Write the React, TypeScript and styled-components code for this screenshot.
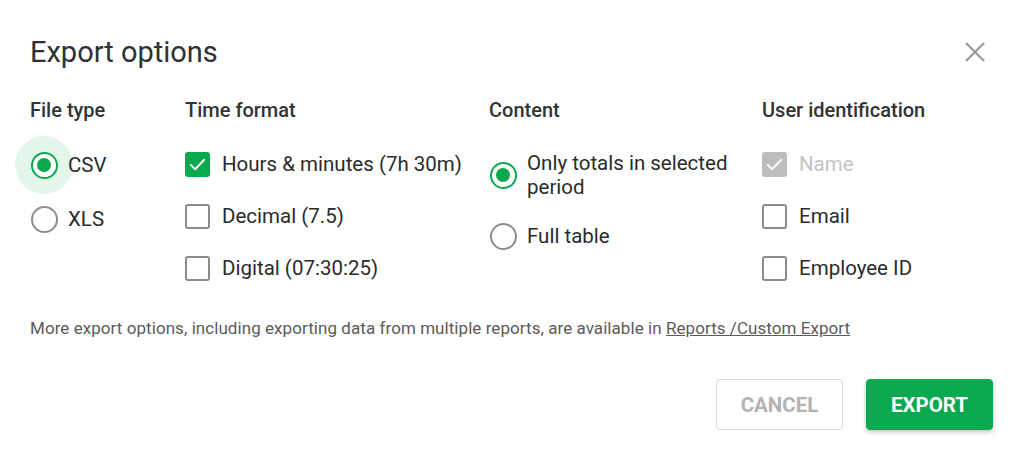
import styled, { createGlobalStyle } from "styled-components";

const GlobalStyle = createGlobalStyle`
  html, body {
    margin: 0;
    padding: 0;
    background: #ffffff;
  }
  body {
    font-family: Roboto, "Liberation Sans", sans-serif;
    -webkit-font-smoothing: antialiased;
  }
`;

const GREEN = "#0aa84f";

const Dialog = styled.div`
  width: 1020px;
  height: 457px;
  box-sizing: border-box;
  padding: 28px 27px 0 30px;
  background: #fff;
  color: #2c2c2e;
`;

const Header = styled.div`
  display: flex;
  align-items: center;
  justify-content: space-between;
  height: 48px;
`;

const Title = styled.h2`
  margin: 0;
  font-size: 29px;
  font-weight: 400;
  color: #2e3035;
`;

const Close = styled.button`
  border: 0;
  background: none;
  padding: 0;
  margin-right: 6px;
  width: 24px;
  height: 24px;
  display: flex;
  align-items: center;
  justify-content: center;
  cursor: pointer;
`;

const Columns = styled.div`
  display: grid;
  grid-template-columns: 155px 304px 273px 1fr;
  margin-top: 22px;
`;

const Column = styled.div`
  display: flex;
  flex-direction: column;
`;

const ColTitle = styled.div`
  font-size: 20px;
  font-weight: 500;
  line-height: 24px;
  color: #333;
  margin-bottom: 29px;
`;

const Options = styled.div<{ $gap?: number }>`
  display: flex;
  flex-direction: column;
  gap: ${(p) => p.$gap ?? 26}px;
`;

const Option = styled.label<{ disabled?: boolean }>`
  display: flex;
  align-items: center;
  gap: 10px;
  min-height: 26px;
  font-size: 20.5px;
  line-height: 24px;
  color: ${(p) => (p.disabled ? "#c4c4c4" : "#2b2b2b")};
  cursor: pointer;
`;

const Text = styled.span`
  position: relative;
`;

const RadioWrap = styled.span`
  position: relative;
  flex: none;
  width: 28px;
  height: 28px;
  display: flex;
  align-items: center;
  justify-content: center;
`;

const Ripple = styled.span`
  position: absolute;
  left: -15px;
  top: -15px;
  width: 58px;
  height: 58px;
  border-radius: 50%;
  background: #e3f6ea;
`;

const RadioRing = styled.span<{ checked?: boolean }>`
  position: relative;
  box-sizing: border-box;
  width: 27px;
  height: 27px;
  border-radius: 50%;
  border: 2.5px solid ${(p) => (p.checked ? GREEN : "#8c8c8c")};
  background: #fff;
  display: flex;
  align-items: center;
  justify-content: center;
  &::after {
    content: "";
    display: ${(p) => (p.checked ? "block" : "none")};
    width: 14px;
    height: 14px;
    border-radius: 50%;
    background: ${GREEN};
  }
`;

const Box = styled.span<{ checked?: boolean; disabled?: boolean }>`
  flex: none;
  box-sizing: border-box;
  width: 25px;
  height: 25px;
  margin-right: 2px;
  border-radius: 3px;
  border: 2px solid
    ${(p) => (p.disabled ? "#bdbdbd" : p.checked ? GREEN : "#8f8a8a")};
  background: ${(p) => (p.disabled ? "#bdbdbd" : p.checked ? GREEN : "#fff")};
  display: flex;
  align-items: center;
  justify-content: center;
`;

const Note = styled.p`
  margin: 36px 0 0;
  font-size: 17px;
  line-height: 22px;
  letter-spacing: 0.06px;
  color: #5e5a5a;
  a {
    color: #5e5a5a;
    text-decoration: underline;
  }
`;

const Actions = styled.div`
  display: flex;
  justify-content: flex-end;
  gap: 23px;
  margin-top: 40px;
`;

const Button = styled.button<{ primary?: boolean }>`
  width: 127px;
  height: 51px;
  border-radius: 4px;
  font-family: Roboto, "Liberation Sans", sans-serif;
  font-size: 20.5px;
  font-weight: 700;
  cursor: pointer;
  border: 1px solid ${(p) => (p.primary ? GREEN : "#dcdcdc")};
  background: ${(p) => (p.primary ? GREEN : "#fff")};
  color: ${(p) => (p.primary ? "#fff" : "#b3b3b3")};
  box-shadow: ${(p) => (p.primary ? "0 2px 4px rgba(0,0,0,0.25)" : "none")};
`;

function Check() {
  return (
    <svg width="19" height="19" viewBox="0 0 24 24" fill="none">
      <path d="M3.5 12.5l5.5 5.5L20.5 6" stroke="#fff" strokeWidth="2.3" strokeLinecap="round" strokeLinejoin="round" />
    </svg>
  );
}

function Radio({ label, checked, ripple }: { label: string; checked?: boolean; ripple?: boolean }) {
  return (
    <Option>
      <RadioWrap>
        {ripple && <Ripple />}
        <RadioRing checked={checked} />
      </RadioWrap>
      <Text>{label}</Text>
    </Option>
  );
}

function Checkbox({ label, checked, disabled }: { label: string; checked?: boolean; disabled?: boolean }) {
  return (
    <Option disabled={disabled}>
      <Box checked={checked} disabled={disabled}>
        {checked && <Check />}
      </Box>
      <Text>{label}</Text>
    </Option>
  );
}

export default function App() {
  return (
    <>
      <GlobalStyle />
      <Dialog>
        <Header>
          <Title>Export options</Title>
          <Close aria-label="Close">
            <svg width="22" height="22" viewBox="0 0 22 22">
              <path d="M2 2L20 20M20 2L2 20" stroke="#9b9da4" strokeWidth="2.4" />
            </svg>
          </Close>
        </Header>
        <Columns>
          <Column>
            <ColTitle>File type</ColTitle>
            <Options>
              <Radio label="CSV" checked ripple />
              <Radio label="XLS" />
            </Options>
          </Column>
          <Column>
            <ColTitle>Time format</ColTitle>
            <Options>
              <Checkbox label="Hours & minutes (7h 30m)" checked />
              <Checkbox label="Decimal (7.5)" />
              <Checkbox label="Digital (07:30:25)" />
            </Options>
          </Column>
          <Column>
            <ColTitle>Content</ColTitle>
            <Options $gap={23}>
              <Radio label="Only totals in selected period" checked />
              <Radio label="Full table" />
            </Options>
          </Column>
          <Column>
            <ColTitle>User identification</ColTitle>
            <Options>
              <Checkbox label="Name" checked disabled />
              <Checkbox label="Email" />
              <Checkbox label="Employee ID" />
            </Options>
          </Column>
        </Columns>
        <Note>
          More export options, including exporting data from multiple reports, are available in{" "}
          <a href="#">Reports /Custom Export</a>
        </Note>
        <Actions>
          <Button>CANCEL</Button>
          <Button primary>EXPORT</Button>
        </Actions>
      </Dialog>
    </>
  );
}
